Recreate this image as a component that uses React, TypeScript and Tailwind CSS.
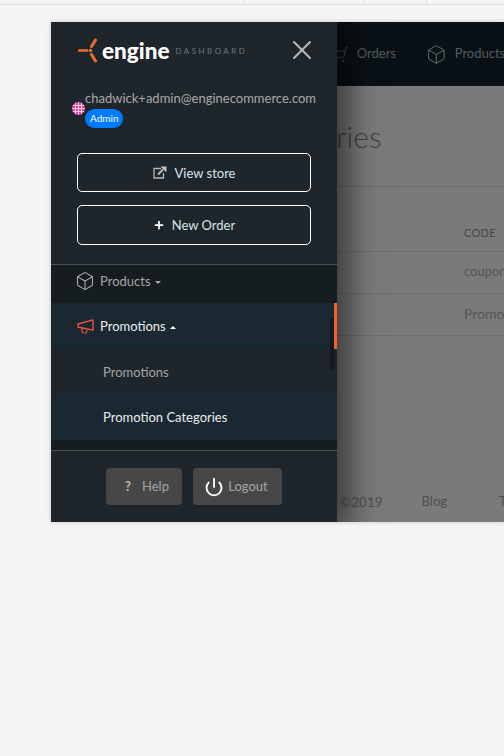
import React from "react";
import { Box, Plus, Power, ShoppingCart, X } from "lucide-react";

const lato = "font-['Lato','Liberation_Sans',sans-serif]";

function Caret({ up = false }: { up?: boolean }) {
  return (
    <span
      className={`ml-[4px] inline-block h-0 w-0 border-x-[3px] border-x-transparent ${
        up ? "border-b-[3px] border-b-white" : "border-t-[3px] border-t-[#aaaaaa]"
      }`}
    />
  );
}

function Logo() {
  return (
    <svg width="21" height="25" viewBox="0 0 21 25" className="shrink-0">
      <g fill="none" stroke="#ee6a33" strokeLinecap="round">
        <path d="M1 12.5 H9" strokeWidth="2.6" />
        <path d="M13.5 8.5 L17.5 2" strokeWidth="3" />
        <path d="M13.5 16.5 L17.5 23" strokeWidth="3" />
      </g>
      <circle cx="12.5" cy="12.5" r="1.8" fill="#ee6a33" />
    </svg>
  );
}

function Avatar() {
  return (
    <span className="relative h-[13px] w-[13px] shrink-0 overflow-hidden rounded-full bg-[#d9459c]">
      <svg viewBox="0 0 13 13" className="h-[13px] w-[13px]">
        <path d="M0 3.5H13M0 6.5H13M0 9.5H13M3.5 0V13M6.5 0V13M9.5 0V13" stroke="#f3c6e2" strokeWidth="1" />
      </svg>
    </span>
  );
}

function ExternalIcon() {
  return (
    <svg width="14" height="13" viewBox="0 0 14 13" className="mr-[8px] mt-[-2px] shrink-0">
      <path d="M8 2.5H1V12H10.5V7" fill="none" stroke="#b5b5b5" strokeWidth="1.3" />
      <path d="M5 8.5L10 3.5" stroke="#c4c4c4" strokeWidth="1.8" />
      <path d="M7.5 0.5H13.5V6.5Z" fill="#c4c4c4" />
    </svg>
  );
}

function MegaphoneIcon() {
  return (
    <svg width="17" height="15" viewBox="0 0 17 15" className="mr-[6px] mt-[-2px] shrink-0">
      <path d="M1 5 L16 0.8 V11.2 L1 8 Z" fill="none" stroke="#f0543c" strokeWidth="1.3" strokeLinejoin="round" />
      <path d="M5 9 V12.5 C5 13.5 6 14 7 14 H9.5 L10 11" fill="none" stroke="#f0543c" strokeWidth="1.2" />
    </svg>
  );
}

function Drawer() {
  return (
    <aside className="relative z-10 flex h-full w-[286px] shrink-0 flex-col bg-[#1e252b] shadow-[0_0_30px_12px_rgba(0,0,0,0.55)]">
      <header className="flex h-[58px] items-start pl-[27px] pr-[19px] pt-[16px]">
        <Logo />
        <span className="ml-[3px] mt-[-1px] text-[22.5px] font-black leading-[28px] text-white">engine</span>
        <span className="ml-[6px] mt-[8px] text-[8px] leading-[10px] tracking-[2.45px] text-[#6d757b]">DASHBOARD</span>
        <X className="ml-auto mt-[-4px] text-[#b9b9b9]" size={32} strokeWidth={1.5} />
      </header>

      <div className="flex h-[73px] items-start pl-[21px] pt-[22px]">
        <Avatar />
        <div className="mt-[-13px] flex flex-col items-start">
          <span className="text-[13px] leading-[18px] text-[#a9a9a9]">chadwick+admin@enginecommerce.com</span>
          <span className="mt-[2px] rounded-full bg-[#007bff] px-[5px] text-[10px] leading-[19px] text-white">Admin</span>
        </div>
      </div>

      <div className="flex h-[111px] flex-col gap-[13px] px-[26px]">
        <button className="flex h-[39px] items-center justify-center rounded-[5px] border border-white pt-[2px] text-[13px] text-[#d8e4ea]">
          <ExternalIcon />
          View store
        </button>
        <button className="flex h-[40px] items-center justify-center rounded-[5px] border border-white pt-[2px] text-[13px] text-[#d8e4ea]">
          <Plus size={12} strokeWidth={3.5} className="mr-[7px] mt-[-2px] text-white" />
          New Order
        </button>
      </div>

      <nav className="relative flex-none border-t border-[#4a4f52] bg-[#161d20]">
        <div className="flex h-[38px] items-center pb-[4px] pl-[24px] text-[13px] text-[#a6a6a6]">
          <Box size={20} strokeWidth={1.25} className="mr-[5px] mt-[-2px] text-[#b0b0b0]" />
          Products
          <Caret />
        </div>
        <div className="flex h-[46px] items-center bg-[#1a2832] pl-[26px] pt-[2px] text-[13px] text-[#ececec]">
          <MegaphoneIcon />
          Promotions
          <Caret up />
        </div>
        <div className="flex h-[45px] items-center bg-[#1e252b] pl-[52px] pt-[2px] text-[13px] text-[#a6a6a6]">Promotions</div>
        <div className="flex h-[46px] items-center bg-[#1a2832] pl-[52px] pt-[2px] text-[13px] text-[#ececec]">Promotion Categories</div>
        <div className="h-[10px]" />
        <span className="absolute right-[2px] top-[53px] h-[52px] w-[5px] rounded-full bg-[#141a1d]" />
        <span className="absolute right-0 top-[38px] h-[46px] w-[3px] bg-[#f2622d]" />
      </nav>

      <footer className="flex flex-1 items-start justify-center gap-[11px] border-t border-[#4a4f52] pt-[17px] text-[13px]">
        <button className="flex h-[37px] w-[76px] items-center justify-center rounded-[4px] bg-[#474747] pl-[6px] text-[#a0a4a7]">
          <span className="mr-[11px] text-[13px] font-bold text-[#bdbdbd]">?</span>
          Help
        </button>
        <button className="flex h-[37px] w-[89px] items-center justify-center rounded-[4px] bg-[#474747] pr-[3px] text-[#a0a8ad]">
          <Power size={20} strokeWidth={2.2} className="mr-[4px] text-white" />
          Logout
        </button>
      </footer>
    </aside>
  );
}

function Backdrop() {
  return (
    <main className="flex h-full min-w-0 flex-1 flex-col overflow-hidden bg-[#7a7a7a] text-[#494949]">
      <div className="flex h-[64px] shrink-0 items-center whitespace-nowrap bg-[#0a1116] text-[13px] text-[#555b5f]">
        <ShoppingCart size={17} strokeWidth={1.2} className="ml-[-5px] mr-[8px] scale-x-[-1] text-[#555b5f]" />
        <span>Orders</span>
        <Box size={21} strokeWidth={1.1} className="ml-[30px] mr-[8px] text-[#6a6f72]" />
        <span className="w-[50px] overflow-hidden">Products</span>
      </div>
      <div className="flex h-[101px] shrink-0 items-center border-b border-[#696969] text-[30px] font-light text-[#3f4347]">
        <span className="ml-[-1px]">ries</span>
      </div>
      <div className="flex h-[65px] shrink-0 items-end border-b border-[#6d6d6d] pb-[10px] pl-[127px] text-[11px] tracking-[0.3px]">
        CODE
      </div>
      <div className="flex h-[42px] shrink-0 items-center whitespace-nowrap border-b border-[#6d6d6d] pb-[2px] pl-[127px] text-[13px] text-[#555]">
        <span className="w-[40px] overflow-hidden">coupon</span>
      </div>
      <div className="flex h-[42px] shrink-0 items-center whitespace-nowrap border-b border-[#6d6d6d] pb-[2px] pl-[127px] text-[14px] text-[#555]">
        <span className="w-[40px] overflow-hidden">Promos</span>
      </div>
      <div className="mt-auto flex h-[30px] items-start whitespace-nowrap pl-[3px] text-[13.5px] text-[#4f4f4f]">
        <span>©2019</span>
        <span className="ml-[39px] text-[13px]">Blog</span>
        <span className="ml-[52px] text-[13px]">T</span>
      </div>
    </main>
  );
}

export default function App() {
  return (
    <div className={`${lato} flex h-[756px] w-[504px] flex-col overflow-hidden bg-[#f5f5f5]`}>
      <div className="flex h-[5px] shrink-0 border-b border-[#dedede]">
        <div className="w-[244px] border-r border-[#dedede]" />
        <div className="w-[120px] border-r border-[#dedede]" />
        <div className="w-[63px] border-r border-[#dedede]" />
      </div>
      <div className="ml-[51px] mt-[17px] flex h-[500px] w-[453px] overflow-hidden shadow-[0_0_5px_rgba(0,0,0,0.18)]">
        <Drawer />
        <Backdrop />
      </div>
    </div>
  );
}
